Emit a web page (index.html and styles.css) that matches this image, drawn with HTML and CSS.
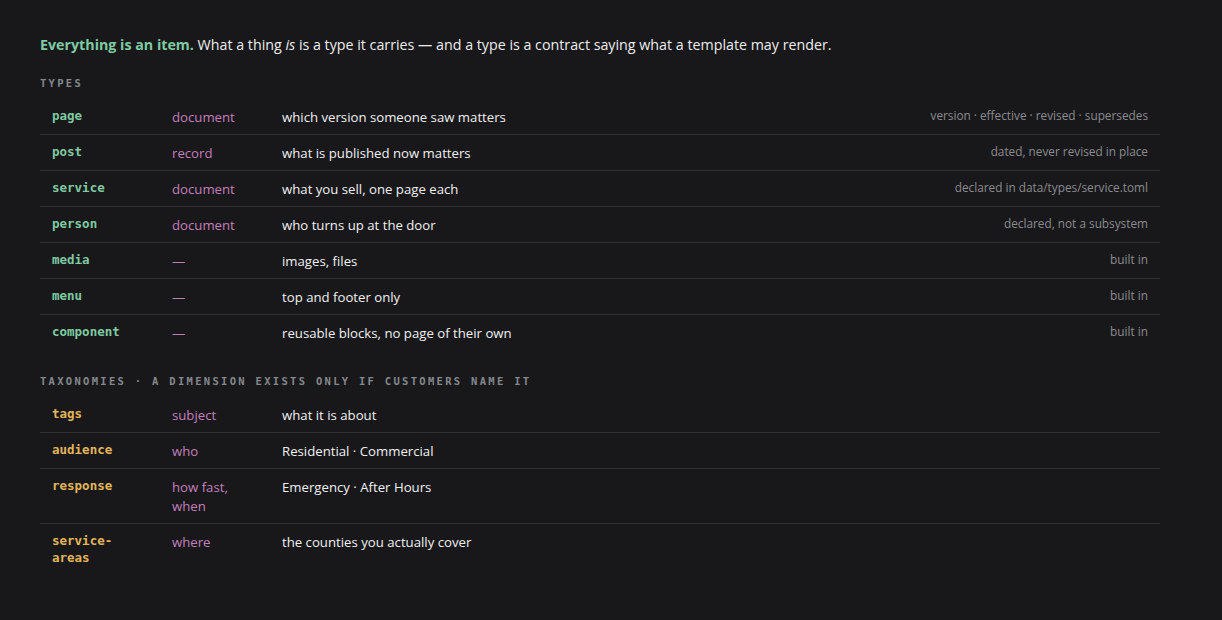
FILE: index.html
```html
<!DOCTYPE html>
<html lang="en">
<head>
<meta charset="utf-8">
<title>Items and types</title>
<link rel="stylesheet" href="styles.css">
</head>
<body>
<main class="wrap">
  <p class="intro"><strong>Everything is an item.</strong> What a thing <em>is</em> is a type it carries — and a type is a contract saying what a template may render.</p>

  <h2 class="label">Types</h2>
  <table class="grid types">
    <tr><td class="name">page</td><td class="kind">document</td><td class="desc">which version someone saw matters</td><td class="note">version · effective · revised · supersedes</td></tr>
    <tr><td class="name">post</td><td class="kind">record</td><td class="desc">what is published now matters</td><td class="note">dated, never revised in place</td></tr>
    <tr><td class="name">service</td><td class="kind">document</td><td class="desc">what you sell, one page each</td><td class="note">declared in data/types/service.toml</td></tr>
    <tr><td class="name">person</td><td class="kind">document</td><td class="desc">who turns up at the door</td><td class="note">declared, not a subsystem</td></tr>
    <tr><td class="name">media</td><td class="kind">—</td><td class="desc">images, files</td><td class="note">built in</td></tr>
    <tr><td class="name">menu</td><td class="kind">—</td><td class="desc">top and footer only</td><td class="note">built in</td></tr>
    <tr><td class="name">component</td><td class="kind">—</td><td class="desc">reusable blocks, no page of their own</td><td class="note">built in</td></tr>
  </table>

  <h2 class="label">Taxonomies · a dimension exists only if customers name it</h2>
  <table class="grid tax">
    <tr><td class="name">tags</td><td class="kind">subject</td><td class="desc">what it is about</td><td class="note"></td></tr>
    <tr><td class="name">audience</td><td class="kind">who</td><td class="desc">Residential · Commercial</td><td class="note"></td></tr>
    <tr><td class="name">response</td><td class="kind">how fast, when</td><td class="desc">Emergency · After Hours</td><td class="note"></td></tr>
    <tr><td class="name">service-areas</td><td class="kind">where</td><td class="desc">the counties you actually cover</td><td class="note"></td></tr>
  </table>
</main>
</body>
</html>
```
FILE: styles.css
```css
html, body {
  margin: 0;
  padding: 0;
  background: #18181b;
}
body {
  color: #ececec;
  font-family: "Open Sans", "Noto Sans", sans-serif;
  font-size: 13.2px;
}
.wrap {
  max-width: 1120px;
  padding: 33px 40px 40px;
}
.intro {
  margin: 0;
  line-height: 24px;
  font-size: 14.25px;
  color: #ededed;
}
.intro strong {
  color: #7fcaa0;
  font-weight: 700;
}
.label {
  margin: 18px 0 8px;
  font-family: "DejaVu Sans Mono", "Liberation Mono", monospace;
  font-size: 10.5px;
  font-weight: 700;
  letter-spacing: 2.3px;
  text-transform: uppercase;
  color: #85888c;
  line-height: 16px;
}
.grid {
  width: 100%;
  border-collapse: collapse;
  table-layout: fixed;
}
.grid + .label { margin-top: 23px; }
.grid tr { border-bottom: 1px solid #303034; }
.grid tr:last-child { border-bottom: none; }
.grid td {
  padding: 9px 12px 7px;
  line-height: 19px;
  vertical-align: top;
}
.grid td.name {
  width: 96px;
  font-family: "DejaVu Sans Mono", "Liberation Mono", monospace;
  font-size: 12.5px;
  font-weight: 700;
  color: #7fcaa0;
  line-height: 17px;
  padding-top: 8px;
}
.tax td.name {
  color: #e2b55a;
}
.grid td.kind {
  width: 86px;
  color: #c47fba;
}
.grid td.desc {
  width: 300px;
  color: #f0f0f0;
}
.grid td.note {
  text-align: right;
  color: #8b8b8e;
  font-size: 11.8px;
  line-height: 17px;
  padding-top: 8px;
}
```
